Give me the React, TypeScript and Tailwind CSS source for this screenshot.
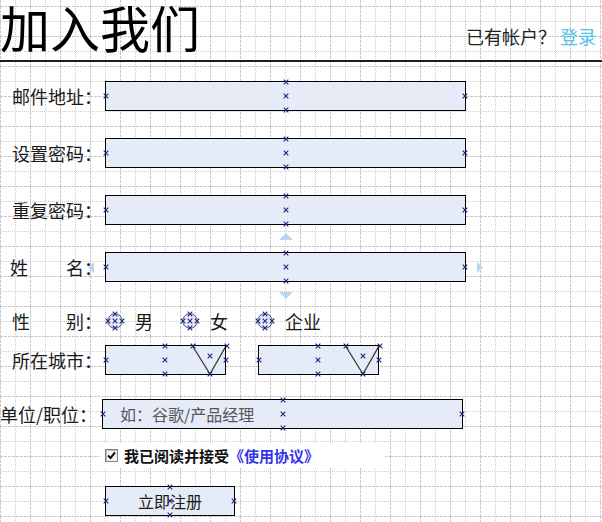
import React from "react";

const ink = "#22227a";

function Mark({ className }: { className: string }) {
  return (
    <svg
      className={`pointer-events-none absolute -translate-x-1/2 -translate-y-1/2 ${className}`}
      width="6"
      height="6"
      viewBox="0 0 6 6"
    >
      <path d="M0.7 0.7L5.3 5.3M5.3 0.7L0.7 5.3" stroke={ink} strokeWidth="1.1" />
    </svg>
  );
}

function Grid() {
  return (
    <svg className="pointer-events-none absolute inset-0" width="602" height="522">
      <defs>
        <pattern id="grid" width="30" height="30" y="6" patternUnits="userSpaceOnUse">
          <path d="M0.5 0V30" stroke="#c9c9c9" strokeDasharray="3 1" />
          <path d="M15.5 0V30" stroke="#cdcdcd" strokeDasharray="1 1" />
          <path d="M0 0.5H30" stroke="#c9c9c9" strokeDasharray="3 1" />
          <path d="M0 15.5H30" stroke="#cdcdcd" strokeDasharray="1 1" />
        </pattern>
      </defs>
      <rect width="602" height="522" fill="url(#grid)" />
    </svg>
  );
}

function Field({ placeholder, arrows }: { placeholder?: string; arrows?: boolean }) {
  return (
    <div className="relative h-[30px] w-[361px] border border-black bg-[#e5ebf7]">
      {placeholder && (
        <div className="flex h-full items-center pl-[17px] text-[16px] text-[#555]">{placeholder}</div>
      )}
      <Mark className="left-0 top-1/2" />
      <Mark className="left-full top-1/2" />
      <Mark className="left-[180px] top-0" />
      <Mark className="left-[180px] top-1/2" />
      <Mark className="left-[180px] top-full" />
      {arrows && (
        <>
          <svg className="absolute left-[173px] top-[-20px]" width="14" height="7">
            <path d="M0 7L7 0L14 7Z" fill="#b8d6f2" />
          </svg>
          <svg className="absolute left-[173px] top-[39px]" width="14" height="7">
            <path d="M0 0L7 7L14 0Z" fill="#b8d6f2" />
          </svg>
          <svg className="absolute left-[-18px] top-[9px]" width="6" height="11">
            <path d="M6 0L0 5.5L6 11Z" fill="#b8d6f2" />
          </svg>
          <svg className="absolute left-[371px] top-[9px]" width="6" height="11">
            <path d="M0 0L6 5.5L0 11Z" fill="#b8d6f2" />
          </svg>
        </>
      )}
    </div>
  );
}

function Select() {
  return (
    <div className="relative h-[30px] w-[121px] border border-black bg-[#e5ebf7]">
      <svg className="absolute inset-0" width="119" height="28">
        <polyline points="86.5,0 104,28 120,0" fill="none" stroke="#333" strokeWidth="1.2" />
      </svg>
      <Mark className="left-0 top-1/2" />
      <Mark className="left-[59px] top-0" />
      <Mark className="left-[59px] top-1/2" />
      <Mark className="left-[59px] top-full" />
      <Mark className="left-[87px] top-0" />
      <Mark className="left-[104px] top-[10px]" />
      <Mark className="left-[104px] top-full" />
      <Mark className="left-[121px] top-0" />
      <Mark className="left-[120px] top-1/2" />
    </div>
  );
}

function Radio({ label }: { label: string }) {
  return (
    <div className="flex w-[75px] shrink-0 items-center">
      <div className="relative ml-[2px] h-[16px] w-[16px]">
        <svg width="16" height="16" viewBox="0 0 16 16">
          <circle cx="8" cy="8" r="7.3" fill="#e5ebf7" stroke="#4a4a9a" strokeWidth="1" />
        </svg>
        <Mark className="left-1/2 top-1/2" />
        <Mark className="left-1/2 top-[1px]" />
        <Mark className="left-1/2 top-[15px]" />
        <Mark className="left-[1px] top-1/2" />
        <Mark className="left-[15px] top-1/2" />
      </div>
      <span className="ml-[12px]">{label}</span>
    </div>
  );
}

function Label({ text }: { text: string }) {
  return <div className="w-[105px] shrink-0 pl-[12px]">{text}</div>;
}

export default function App() {
  return (
    <div className="relative h-[522px] w-[602px] overflow-hidden bg-white font-['Noto_Sans_CJK_SC',sans-serif] text-[18px] leading-none text-[#1a1a1a]">
      <Grid />
      <div className="relative">
        <header className="flex h-[62px] items-start justify-between border-b-2 border-[#1e1e1e]">
          <h1 className="text-[50px] font-normal leading-[52px] text-black">加入我们</h1>
          <div className="mt-[27px] pr-[6px] text-[18px] leading-[18px] text-[#222]">
            已有帐户？<a className="ml-[4px] text-[#56c1e9]">登录</a>
          </div>
        </header>

        <div className="mt-[19px] flex items-center">
          <Label text="邮件地址：" />
          <Field />
        </div>
        <div className="mt-[27px] flex items-center">
          <Label text="设置密码：" />
          <Field />
        </div>
        <div className="mt-[27px] flex items-center">
          <Label text="重复密码：" />
          <Field />
        </div>
        <div className="mt-[27px] flex items-center">
          <div className="flex w-[105px] shrink-0 pl-[10px]">
            <span>姓</span>
            <span className="ml-[38px]">名：</span>
          </div>
          <Field arrows />
        </div>

        <div className="mt-[24px] flex h-[30px] items-center">
          <div className="flex w-[105px] shrink-0 pl-[12px]">
            <span>性</span>
            <span className="ml-[36px]">别：</span>
          </div>
          <Radio label="男" />
          <Radio label="女" />
          <Radio label="企业" />
        </div>

        <div className="mt-[9px] flex items-center">
          <Label text="所在城市：" />
          <Select />
          <div className="ml-[32px]">
            <Select />
          </div>
        </div>

        <div className="mt-[24px] flex items-center">
          <div className="w-[102px] shrink-0">单位/职位：</div>
          <Field placeholder="如：谷歌/产品经理" />
        </div>

        <div className="ml-[100px] mt-[14px] flex h-[25px] w-[285px] items-center bg-white pl-[5px] text-[15px] font-bold">
          <div className="relative h-[13px] w-[13px] border border-[#808080] bg-[#f4f4f4] shadow-[inset_1px_1px_0_#c0c0c0]">
            <svg className="absolute left-0 top-0" width="11" height="11" viewBox="0 0 11 11">
              <path d="M2 5.5L4.5 8L9 2.5" fill="none" stroke="#111" strokeWidth="2" />
            </svg>
          </div>
          <span className="ml-[6px] text-[#111]">我已阅读并接受</span>
          <span className="text-[#3535e8]">《使用协议》</span>
        </div>

        <div className="ml-[105px] mt-[18px]">
          <div className="relative flex h-[30px] w-[130px] items-center justify-center border border-black bg-[#e5ebf7] text-[16px]">
            立即注册
            <Mark className="left-0 top-1/2" />
            <Mark className="left-full top-1/2" />
            <Mark className="left-[64px] top-0" />
            <Mark className="left-[64px] top-1/2" />
            <Mark className="left-[64px] top-full" />
          </div>
        </div>
      </div>
    </div>
  );
}
